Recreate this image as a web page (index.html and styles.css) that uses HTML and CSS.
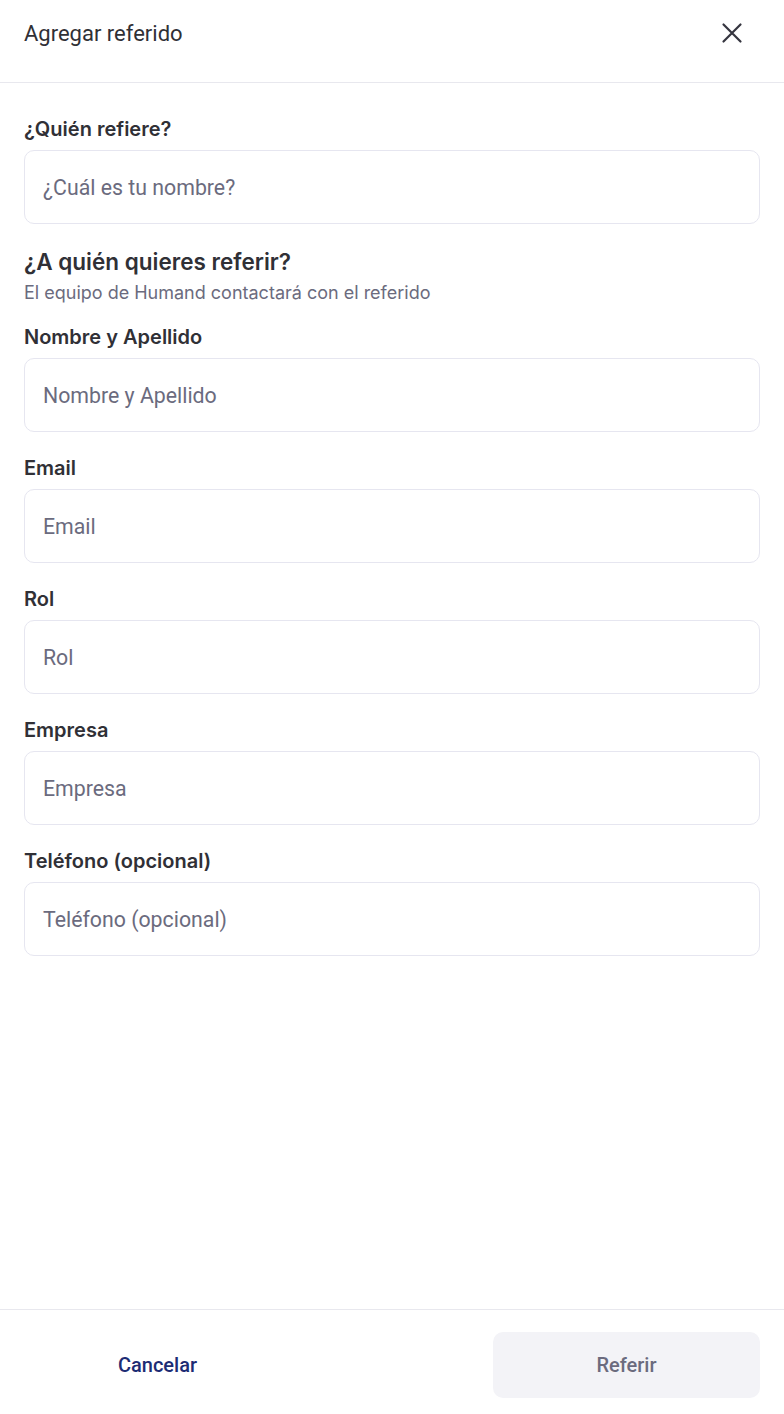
FILE: index.html
```html
<!DOCTYPE html>
<html lang="es">
<head>
<meta charset="utf-8">
<title>Agregar referido</title>
<link rel="stylesheet" href="styles.css">
</head>
<body>
<div class="modal">
  <header class="modal-header">
    <h1 class="modal-title">Agregar referido</h1>
    <button class="close-btn" aria-label="Cerrar">
      <svg width="24" height="24" viewBox="0 0 24 24" fill="none" stroke="#35353f" stroke-width="2.2" stroke-linecap="round"><path d="M3.5 3.5L20.5 20.5M20.5 3.5L3.5 20.5"/></svg>
    </button>
  </header>
  <main class="modal-body">
    <div class="field first">
      <label class="label">¿Quién refiere?</label>
      <div class="input"><span class="placeholder">¿Cuál es tu nombre?</span></div>
    </div>
    <div class="section-head">
      <h2 class="section-title">¿A quién quieres referir?</h2>
      <p class="section-sub">El equipo de Humand contactará con el referido</p>
    </div>
    <div class="field">
      <label class="label">Nombre y Apellido</label>
      <div class="input"><span class="placeholder">Nombre y Apellido</span></div>
    </div>
    <div class="field">
      <label class="label">Email</label>
      <div class="input"><span class="placeholder">Email</span></div>
    </div>
    <div class="field">
      <label class="label">Rol</label>
      <div class="input"><span class="placeholder">Rol</span></div>
    </div>
    <div class="field">
      <label class="label">Empresa</label>
      <div class="input"><span class="placeholder">Empresa</span></div>
    </div>
    <div class="field">
      <label class="label">Teléfono (opcional)</label>
      <div class="input"><span class="placeholder">Teléfono (opcional)</span></div>
    </div>
  </main>
  <footer class="modal-footer">
    <button class="btn btn-text">Cancelar</button>
    <button class="btn btn-disabled">Referir</button>
  </footer>
</div>
</body>
</html>
```
FILE: styles.css
```css
* { box-sizing: border-box; }
html, body { margin: 0; padding: 0; background: #ffffff; }
body { font-family: Roboto, "Liberation Sans", sans-serif; color: #303036; }
.modal { width: 784px; height: 1414px; display: flex; flex-direction: column; }
.modal-header {
  height: 83px;
  border-bottom: 1px solid #e8e8ee;
  display: flex;
  justify-content: space-between;
  align-items: flex-start;
  padding: 21px 40px 0 24px;
}
.modal-title { margin: 0; font-family: Roboto, sans-serif; font-weight: 400; font-size: 22px; line-height: 26px; color: #303036; }
.close-btn { border: 0; background: none; padding: 0; margin-top: 0; width: 24px; height: 24px; display: flex; cursor: pointer; }
.modal-body { flex: 1; padding: 0 24px; display: flex; flex-direction: column; }
.field { display: flex; flex-direction: column; gap: 9px; margin-top: 24px; }
.field.first { margin-top: 34px; }
.section-head + .field { margin-top: 21px; }
.label { font-family: Inter, "Noto Sans", sans-serif; font-weight: 600; font-size: 20px; line-height: 24px; color: #303036; }
.input {
  height: 74px;
  border: 1px solid #e6e6f0;
  border-radius: 10px;
  display: flex;
  align-items: center;
  padding: 0 18px;
}
.placeholder { font-family: Roboto, sans-serif; font-size: 21.3px; color: #6b6b7e; }
.section-head { margin-top: 24px; display: flex; flex-direction: column; gap: 6px; }
.section-title { margin: 0; font-family: Inter, sans-serif; font-weight: 600; font-size: 22.5px; line-height: 28px; color: #303036; }
.section-sub { margin: 0; font-family: Inter, sans-serif; font-weight: 400; font-size: 18px; line-height: 22px; color: #6b6b7e; }
.modal-footer {
  height: 105px;
  border-top: 1px solid #e8e8ee;
  display: flex;
  justify-content: space-between;
  padding: 22px 24px 16px;
}
.btn { width: 267px; height: 66px; border: 0; border-radius: 10px; font-family: Roboto, sans-serif; font-weight: 500; font-size: 20px; cursor: pointer; }
.btn-text { background: transparent; color: #1d2c74; }
.btn-disabled { background: #f3f3f7; color: #6b6b7e; }
```
